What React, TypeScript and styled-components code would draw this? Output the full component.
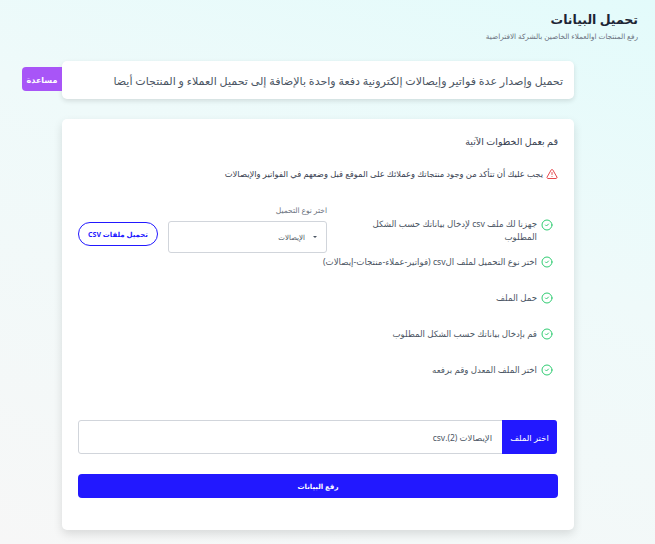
import React from 'react';
import styled, { createGlobalStyle } from 'styled-components';
import { CircleCheck, TriangleAlert } from 'lucide-react';

const GlobalStyle = createGlobalStyle`
    html, body {
        margin: 0;
        padding: 0;
        height: 100%;
    }
    body {
        font-family: "Noto Sans", "DejaVu Sans", sans-serif;
    }
    * {
        box-sizing: border-box;
    }
`;

const steps = [
    'اختر نوع التحميل لملف الcsv (فواتير-عملاء-منتجات-إيصالات)',
    'حمل الملف',
    'قم بإدخال بياناتك حسب الشكل المطلوب',
    'اختر الملف المعدل وقم برفعه',
];

const App = () => {
    return (
        <Page dir='rtl'>
            <GlobalStyle />
            <Header>
                <Title>تحميل البيانات</Title>
                <Subtitle>رفع المنتجات اوالعملاء الخاصين بالشركة الافتراضية</Subtitle>
            </Header>
            <Notice>
                <NoticeText>
                    تحميل وإصدار عدة فواتير وإيصالات إلكترونية دفعة واحدة بالإضافة إلى تحميل العملاء و المنتجات أيضا
                </NoticeText>
                <HelpTag>مساعدة</HelpTag>
            </Notice>
            <Card>
                <CardTitle>قم بعمل الخطوات الآتية</CardTitle>
                <Warning>
                    <TriangleAlert size={12} color='#e5484d' strokeWidth={2} />
                    <span>يجب عليك أن تتأكد من وجود منتجاتك وعملائك على الموقع قبل وضعهم في الفواتير والإيصالات</span>
                </Warning>
                <TopRow>
                    <FirstStep>
                        <CircleCheck size={12} color='#2ecc71' strokeWidth={2} />
                        <StepText>جهزنا لك ملف csv لإدخال بياناتك حسب الشكل المطلوب</StepText>
                    </FirstStep>
                    <SelectGroup>
                        <SelectLabel>اختر نوع التحميل</SelectLabel>
                        <SelectBox>
                            <Caret />
                            <span>الإيصالات</span>
                        </SelectBox>
                    </SelectGroup>
                    <OutlineButton>تحميل ملفات CSV</OutlineButton>
                </TopRow>
                <StepList>
                    {steps.map((text) => (
                        <Step key={text}>
                            <CircleCheck size={12} color='#2ecc71' strokeWidth={2} />
                            <StepText>{text}</StepText>
                        </Step>
                    ))}
                </StepList>
                <FileInput>
                    <FileButton>اختر الملف</FileButton>
                    <FileName>الإيصالات (2).csv</FileName>
                </FileInput>
                <SubmitButton>رفع البيانات</SubmitButton>
            </Card>
        </Page>
    );
};

const Page = styled.div`
    width: 655px;
    height: 544px;
    overflow: hidden;
    padding-top: 11px;
    background: linear-gradient(200deg, #e3fbfb 0%, #effafa 40%, #f7f7f7 100%);
`;

const Header = styled.header`
    padding-right: 17px;
    height: 50px;
`;

const Title = styled.h1`
    margin: 0;
    font-size: 12.5px;
    line-height: 17px;
    font-weight: 700;
    color: #1c2434;
`;

const Subtitle = styled.p`
    margin: 3px 0 0;
    font-size: 7.3px;
    line-height: 10px;
    color: #6b7280;
`;

const Notice = styled.div`
    position: relative;
    margin-right: 81px;
    width: 512px;
    height: 38px;
    padding: 0 11px;
    display: flex;
    align-items: center;
    background: #fff;
    border-radius: 5px;
    box-shadow: 0 2px 5px rgba(0, 0, 0, 0.12);
`;

const NoticeText = styled.p`
    margin: 0;
    font-size: 11.05px;
    white-space: nowrap;
    color: #4b5563;
`;

const HelpTag = styled.div`
    position: absolute;
    top: 6px;
    left: -40px;
    width: 40px;
    height: 24px;
    display: flex;
    align-items: center;
    justify-content: center;
    background: #a855f7;
    color: #fff;
    font-size: 8px;
    font-weight: 700;
    border-radius: 4px 0 0 4px;
`;

const Card = styled.section`
    margin: 20px 81px 0 0;
    width: 512px;
    height: 411px;
    padding: 15px 16px 0;
    background: #fff;
    border-radius: 5px;
    box-shadow: 0 4px 10px rgba(0, 0, 0, 0.12);
`;

const CardTitle = styled.h2`
    margin: 0;
    font-size: 9.5px;
    line-height: 15px;
    font-weight: 400;
    color: #374151;
`;

const Warning = styled.div`
    margin-top: 19px;
    display: flex;
    align-items: center;
    gap: 3px;
    font-size: 8.4px;
    line-height: 12px;
    color: #374151;
`;

const TopRow = styled.div`
    margin-top: 24px;
    display: flex;
    align-items: center;
`;

const FirstStep = styled.div`
    width: 213px;
    padding: 4px 5px 0 15px;
    display: flex;
    align-items: flex-start;
    gap: 4px;
    svg {
        flex-shrink: 0;
        margin-top: 1px;
    }
`;

const StepText = styled.span`
    font-size: 8.65px;
    line-height: 13px;
    color: #4b5563;
`;

const SelectGroup = styled.div`
    width: 159px;
    margin-right: 18px;
`;

const SelectLabel = styled.div`
    font-size: 7.5px;
    line-height: 12px;
    color: #6b7280;
    margin-bottom: 5px;
`;

const SelectBox = styled.div`
    height: 32px;
    padding: 0 9px;
    display: flex;
    align-items: center;
    gap: 8px;
    font-size: 7px;
    color: #4b5563;
    border: 1px solid #d1d5db;
    border-radius: 3px;
`;

const Caret = styled.i`
    border-top: 2px solid #4b5563;
    border-left: 2px solid transparent;
    border-right: 2px solid transparent;
`;

const OutlineButton = styled.button`
    width: 80px;
    height: 24px;
    margin: 11px 10px 0 0;
    padding: 0;
    background: #fff;
    border: 1px solid #2218ff;
    border-radius: 12px;
    color: #2218ff;
    font-family: inherit;
    font-size: 7px;
    font-weight: 700;
`;

const StepList = styled.div`
    margin-top: -9px;
`;

const Step = styled.div`
    height: 36px;
    padding-right: 5px;
    display: flex;
    align-items: center;
    gap: 4px;
`;

const FileInput = styled.div`
    margin: 32px 1px 0 0;
    height: 34px;
    display: flex;
    align-items: stretch;
    border: 1px solid #d1d5db;
    border-radius: 3px;
`;

const FileButton = styled.div`
    width: 55px;
    margin: -1px -1px -1px 0;
    display: flex;
    align-items: center;
    justify-content: center;
    background: #2218ff;
    color: #fff;
    font-size: 8.5px;
    border-radius: 0 3px 3px 0;
`;

const FileName = styled.div`
    padding-right: 10px;
    display: flex;
    align-items: center;
    font-size: 8.5px;
    color: #4b5563;
`;

const SubmitButton = styled.button`
    display: block;
    width: 100%;
    height: 24px;
    margin-top: 20px;
    padding: 0;
    background: #2218ff;
    border: 0;
    border-radius: 4px;
    color: #fff;
    font-family: inherit;
    font-size: 7px;
    font-weight: 700;
`;

export default App;
